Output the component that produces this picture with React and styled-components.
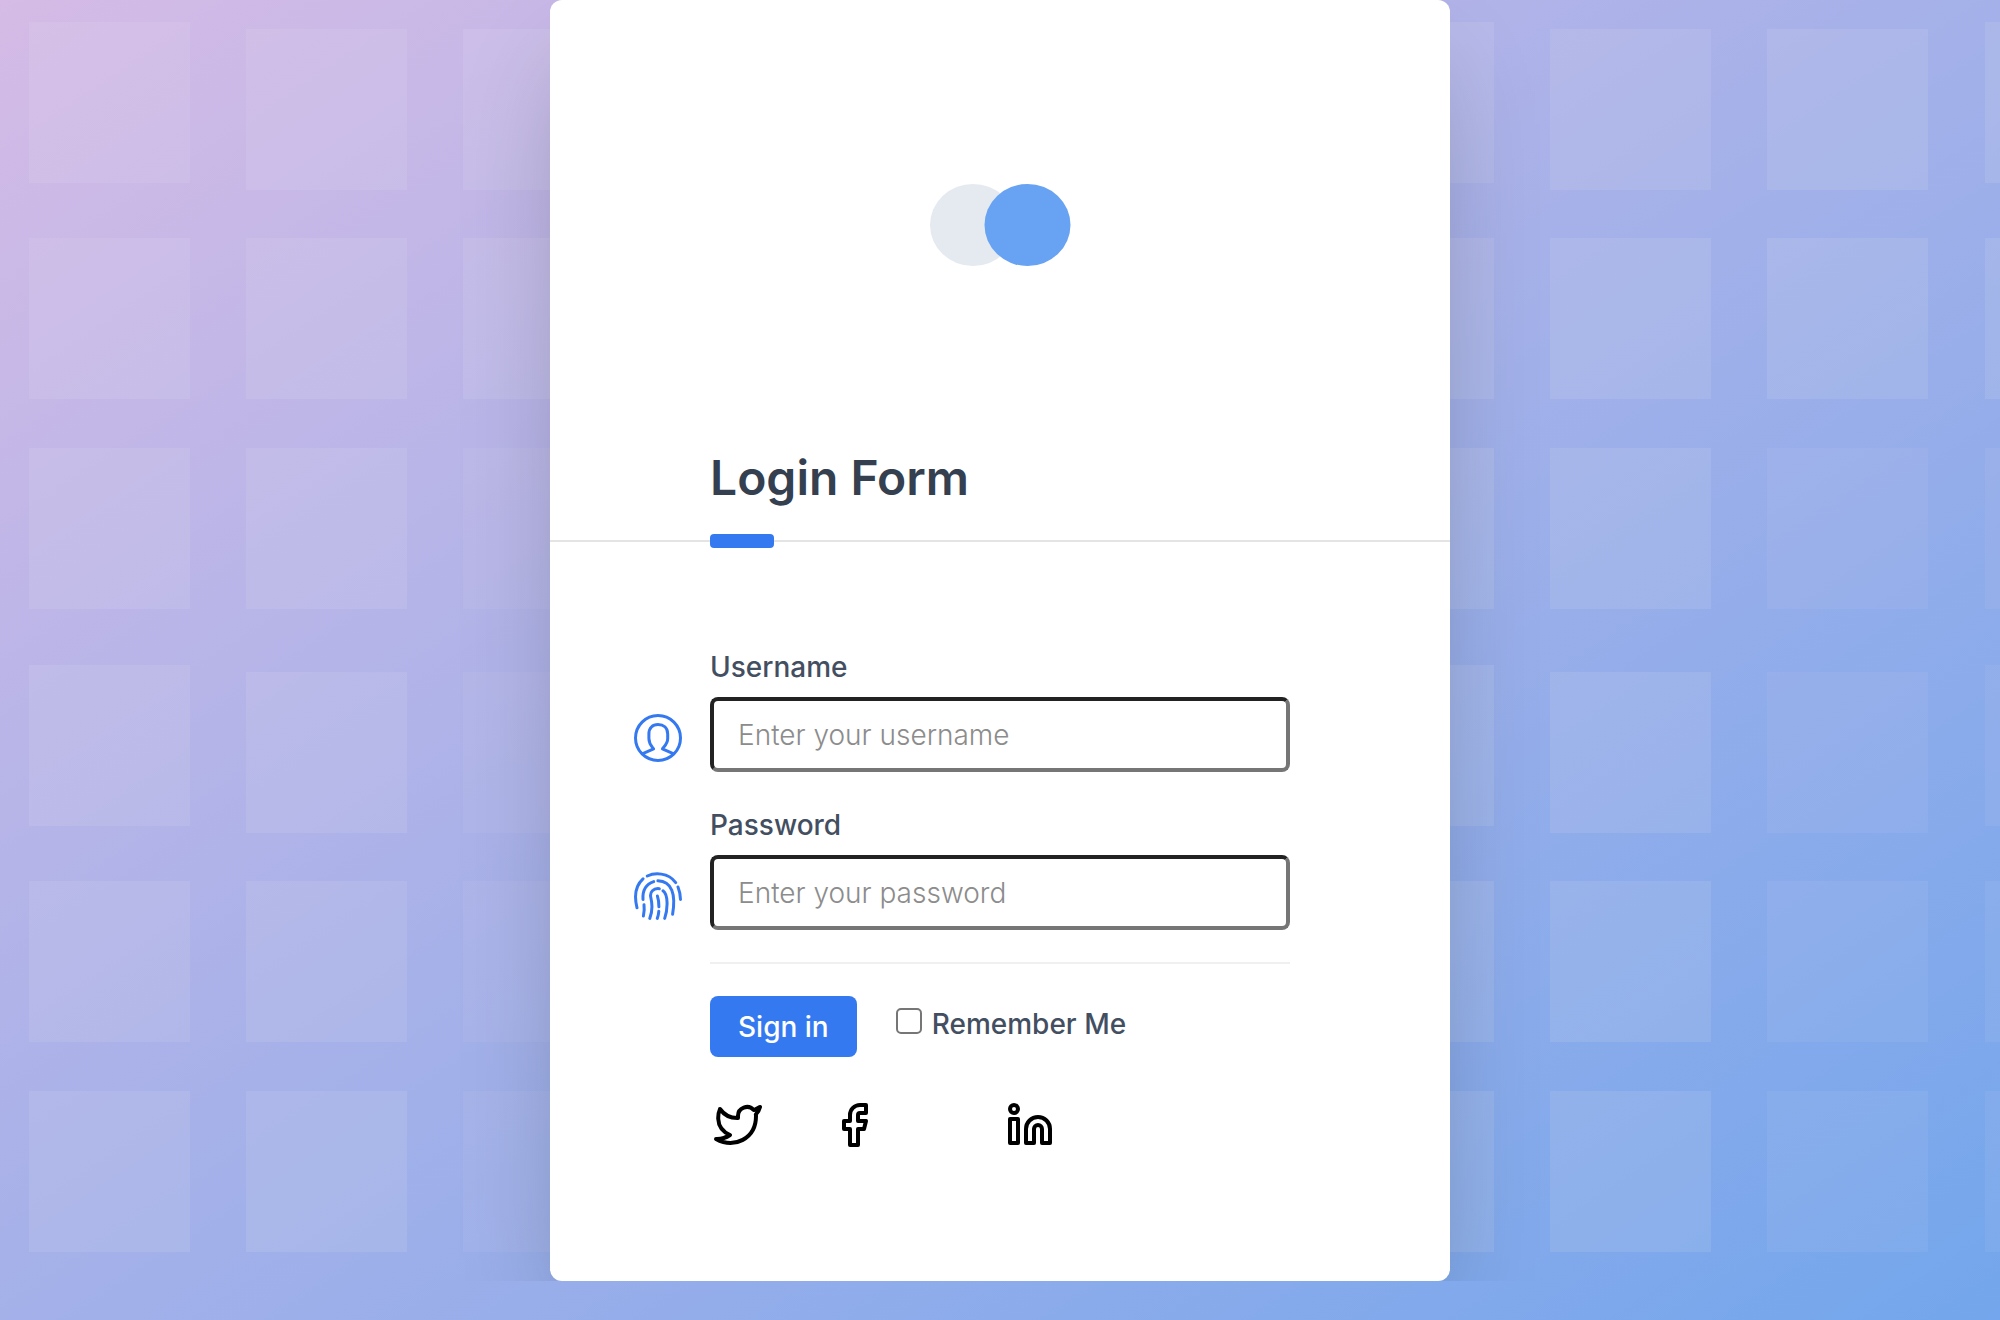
import React from "react";
import styled, { createGlobalStyle } from "styled-components";
import { FiTwitter, FiFacebook, FiLinkedin } from "react-icons/fi";

const blue = "#3579f1";
const slate = "#434f61";

const GlobalStyle = createGlobalStyle`
  *, *::before, *::after {
    box-sizing: border-box;
  }

  body {
    margin: 0;
    min-height: 100vh;
    background: linear-gradient(to bottom right, #d5bbe6, #73a6ec) no-repeat;
    font-family: Inter, "Liberation Sans", sans-serif;
    font-size: 28px;
    line-height: 40px;
    color: ${slate};
  }
`;

const Page = styled.main`
  position: relative;
  display: flex;
  justify-content: center;
  overflow: hidden;
`;

const Backdrop = styled.svg`
  position: absolute;
  inset: 0;
  width: 100%;
  height: 100%;
`;

const Card = styled.section`
  position: relative;
  width: 100%;
  max-width: 900px;
  border-radius: 12px;
  background: #fff;
  box-shadow: 0 50px 100px -24px rgba(0, 0, 0, 0.25);
`;

const CardHeader = styled.header`
  position: relative;
  padding: 184px 160px 32px;
  border-bottom: 2px solid #e4e4e4;

  &::after {
    content: "";
    position: absolute;
    left: 160px;
    bottom: -8px;
    width: 64px;
    height: 14px;
    border-radius: 4px;
    background: ${blue};
  }
`;

const Logo = styled.svg`
  display: block;
  width: 141px;
  height: 82px;
  margin: 0 auto 182px;
`;

const Title = styled.h1`
  margin: 0;
  font-size: 48px;
  font-weight: 600;
  line-height: 60px;
  color: #34404f;
`;

const Form = styled.form`
  display: flex;
  flex-direction: column;
  gap: 32px;
  padding: 105px 160px 132px;
`;

const Fields = styled.div`
  display: grid;
  gap: 33px;
  margin-left: -76px;
`;

const Field = styled.div`
  display: grid;
  grid-template-columns: 48px 1fr;
  column-gap: 28px;
  row-gap: 10px;
`;

const FieldLabel = styled.label`
  grid-column: 2;
  font-weight: 500;
`;

const FieldIcon = styled.svg`
  align-self: end;
  width: 48px;
  height: 48px;
  margin-bottom: 10px;
  fill: none;
  stroke: ${blue};
  stroke-width: 3;
  stroke-linecap: round;
  stroke-linejoin: round;
`;

const TextInput = styled.input`
  width: 100%;
  height: 75px;
  padding: 0 24px;
  border: 4px solid;
  border-color: #222 #767676 #767676 #222;
  border-radius: 8px;
  background: #fff;
  color: ${slate};
  font: inherit;
  font-weight: 300;

  &::placeholder {
    color: #8c8c8c;
    opacity: 1;
  }
`;

const Divider = styled.hr`
  width: 100%;
  height: 2px;
  margin: 0;
  border: 0;
  background: #f0f0f0;
`;

const Actions = styled.div`
  display: flex;
  align-items: flex-start;
  gap: 39px;
`;

const SubmitButton = styled.button`
  height: 61px;
  padding: 0 28px;
  border: 0;
  border-radius: 8px;
  background: ${blue};
  color: #fff;
  font: inherit;
  font-weight: 500;
  cursor: pointer;
`;

const Remember = styled.label`
  display: flex;
  align-items: flex-start;
  gap: 10px;
  margin-top: 8px;
  font-weight: 500;
`;

const Checkbox = styled.input`
  appearance: none;
  width: 26px;
  height: 26px;
  margin: 4px 0 0;
  border: 2px solid #767676;
  border-radius: 5px;
  background: #fff;

  &:checked {
    border-color: ${blue};
    background: ${blue};
  }
`;

const SocialList = styled.ul`
  display: grid;
  grid-template-columns: 116px 176px auto;
  justify-content: start;
  margin: 12px 0 0;
  padding: 0 0 0 4px;
  list-style: none;
`;

const SocialLink = styled.a`
  display: flex;
  width: 48px;
  color: #000;

  svg {
    width: 48px;
    height: 48px;
  }
`;

/* Squares repeat in blocks of three columns by three rows. */
const BLOCK_WIDTH = 652;
const BLOCK_HEIGHT = 643;
const SQUARE = 161;
const COLUMNS = [29, 246, 463];
const ROWS = [22, 238, 448];

const isFaint = (block, col, band, row) =>
  (band > 0 || row === 2) && (col === 2 || block === 3);

const squares = [];
for (let band = 0; band < 2; band += 1) {
  for (let block = 0; block < 6; block += 1) {
    COLUMNS.forEach((x, col) => {
      ROWS.forEach((y, row) => {
        squares.push({
          key: `${band}-${block}-${col}-${row}`,
          x: x + block * BLOCK_WIDTH,
          y: y + band * BLOCK_HEIGHT + (row === 0 && col > 0 ? 7 : 0),
          opacity: isFaint(block, col, band, row) ? 0.07 : 0.125,
        });
      });
    });
  }
}

function Squares() {
  return (
    <Backdrop aria-hidden="true">
      {squares.map(({ key, x, y, opacity }) => (
        <rect key={key} x={x} y={y} width={SQUARE} height={SQUARE} fill="#ebe4ee" fillOpacity={opacity} />
      ))}
    </Backdrop>
  );
}

function UserIcon() {
  return (
    <FieldIcon viewBox="0 0 48 48" aria-hidden="true">
      <circle cx="24" cy="24" r="22.5" />
      <path d="M8.800 39.600 19.600 34.800C18 32.600 14.900 30 14.900 24.500V20C14.900 13.800 18.600 10.600 24 10.600S33.700 13.800 33.700 20v4.500c0 5.500-3.700 8.100-5.300 10.300L39.200 39.600" />
    </FieldIcon>
  );
}

function FingerprintIcon() {
  return (
    <FieldIcon viewBox="0 0 48 48" aria-hidden="true">
      <path d="M13.300 4C20.500.6 34.200.2 41.700 10.600" />
      <path d="M44 15c1.400 3.500 2.400 7.500 2.500 12.500" />
      <path d="M9 6.800C1 14-.2 23 3 35.800" />
      <path d="M19.700 9.600C12.400 12 8.400 18.500 9 27.500" />
      <path d="M23.900 8.800C38 9.500 42 22 38.600 42.300" />
      <path d="M10 32.800c.5 4 .3 7.500-.6 11.200" />
      <path d="M25.300 16.700C19.500 16 15.500 20 16.800 25.500 18.600 33 18.300 40 15.800 46.400" />
      <path d="M29 18.800C34.200 22.500 34 36.500 30.700 46.400" />
      <path d="M23.400 24c1.200 3.500 1.500 7 1.500 10.700" />
      <path d="M24.800 39.300c-.2 2.600-.7 5-1.500 7.100" />
    </FieldIcon>
  );
}

function LoginField({ id, label, type, placeholder, icon }) {
  return (
    <Field>
      <FieldLabel htmlFor={id}>{label}</FieldLabel>
      {icon}
      <TextInput id={id} name={id} type={type} placeholder={placeholder} />
    </Field>
  );
}

const socials = [
  { name: "Twitter", href: "#twitter", Icon: FiTwitter },
  { name: "Facebook", href: "#facebook", Icon: FiFacebook },
  { name: "LinkedIn", href: "#linkedin", Icon: FiLinkedin },
];

export default function App() {
  return (
    <>
      <GlobalStyle />
      <Page>
        <Squares />
        <Card>
          <CardHeader>
            <Logo viewBox="0 0 141 82" aria-hidden="true">
              <ellipse cx="43" cy="41" rx="43" ry="41" fill="#e5eaf1" />
              <ellipse cx="97.500" cy="41" rx="43" ry="41" fill="#68a2f2" />
            </Logo>
            <Title>Login Form</Title>
          </CardHeader>
          <Form onSubmit={(event) => event.preventDefault()}>
            <Fields>
              <LoginField id="username" label="Username" type="text" placeholder="Enter your username" icon={<UserIcon />} />
              <LoginField id="password" label="Password" type="password" placeholder="Enter your password" icon={<FingerprintIcon />} />
            </Fields>
            <Divider />
            <Actions>
              <SubmitButton type="submit">Sign in</SubmitButton>
              <Remember htmlFor="remember">
                <Checkbox id="remember" name="remember" type="checkbox" />
                Remember Me
              </Remember>
            </Actions>
            <SocialList>
              {socials.map(({ name, href, Icon }) => (
                <li key={name}>
                  <SocialLink href={href} aria-label={name}>
                    <Icon />
                  </SocialLink>
                </li>
              ))}
            </SocialList>
          </Form>
        </Card>
      </Page>
    </>
  );
}
